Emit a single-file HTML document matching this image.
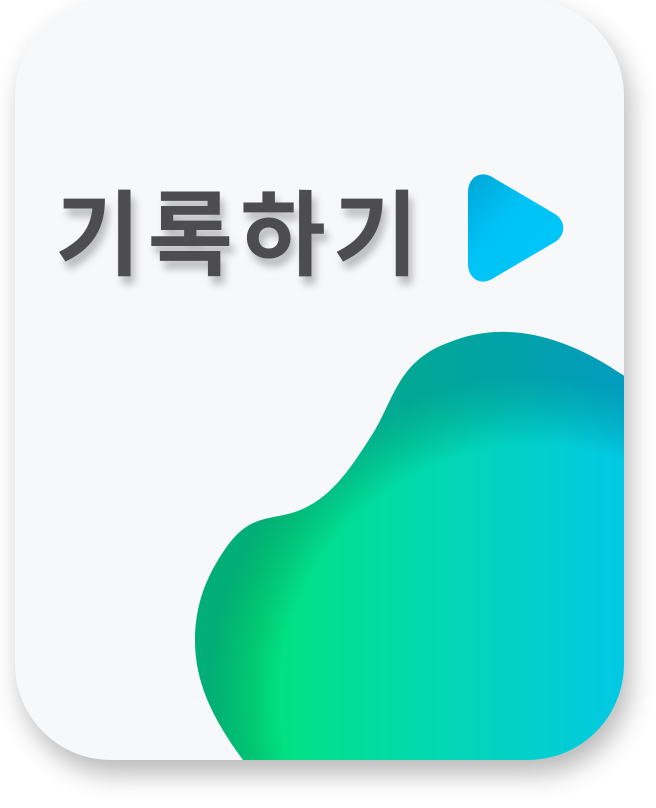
<!DOCTYPE html>
<html><head><meta charset="utf-8"><style>
html,body{margin:0;padding:0;background:#fff;width:656px;height:808px;overflow:hidden}
.card{position:absolute;left:15px;top:0;width:609px;height:760px;border-radius:96px;background:#f7f8fa;box-shadow:6px 14px 26px rgba(0,0,0,0.28);overflow:hidden}
.t{position:absolute;left:40px;top:160px;font-family:"Liberation Sans","Noto Sans CJK KR",sans-serif;font-weight:700;font-size:93px;color:#4d4d4f;letter-spacing:7px;text-shadow:4px 8px 8px rgba(0,0,0,0.25);white-space:nowrap}
svg{position:absolute;left:0;top:0}
</style></head><body>
<div class="card">
<div class="t">기록하기</div>
<svg width="609" height="760" viewBox="15 0 609 760">
<defs>
<linearGradient id="g" x1="0" y1="0" x2="1" y2="0"><stop offset="0.15" stop-color="#02e27e"/><stop offset="0.55" stop-color="#02d8b0"/><stop offset="1" stop-color="#02c8e6"/></linearGradient>
<radialGradient id="s" cx="0.78" cy="0.85" r="0.75"><stop offset="0.78" stop-color="#000" stop-opacity="0"/><stop offset="1" stop-color="#036" stop-opacity="0.3"/></radialGradient>
<linearGradient id="b" x1="0" y1="0" x2="1" y2="1"><stop offset="0" stop-color="#00a6d6"/><stop offset="0.4" stop-color="#00c2f5"/><stop offset="1" stop-color="#00c8fa"/></linearGradient>
</defs>
<path d="M243 760 C210 715 195 680 195 640 C195 600 210 570 228 545 C250 515 270 520 295 512 C330 500 350 470 375 430 C395 395 400 360 450 342 C500 322 560 330 630 380 L630 760 Z" fill="url(#g)"/>
<path d="M243 760 C210 715 195 680 195 640 C195 600 210 570 228 545 C250 515 270 520 295 512 C330 500 350 470 375 430 C395 395 400 360 450 342 C500 322 560 330 630 380 L630 760 Z" fill="url(#s)"/>
<path d="M468 192 C468 178 480 170 492 177 L555 214 C566 221 566 235 555 242 L492 279 C480 286 468 278 468 264 Z" fill="url(#b)"/>
</svg>
</div>
</body></html>
